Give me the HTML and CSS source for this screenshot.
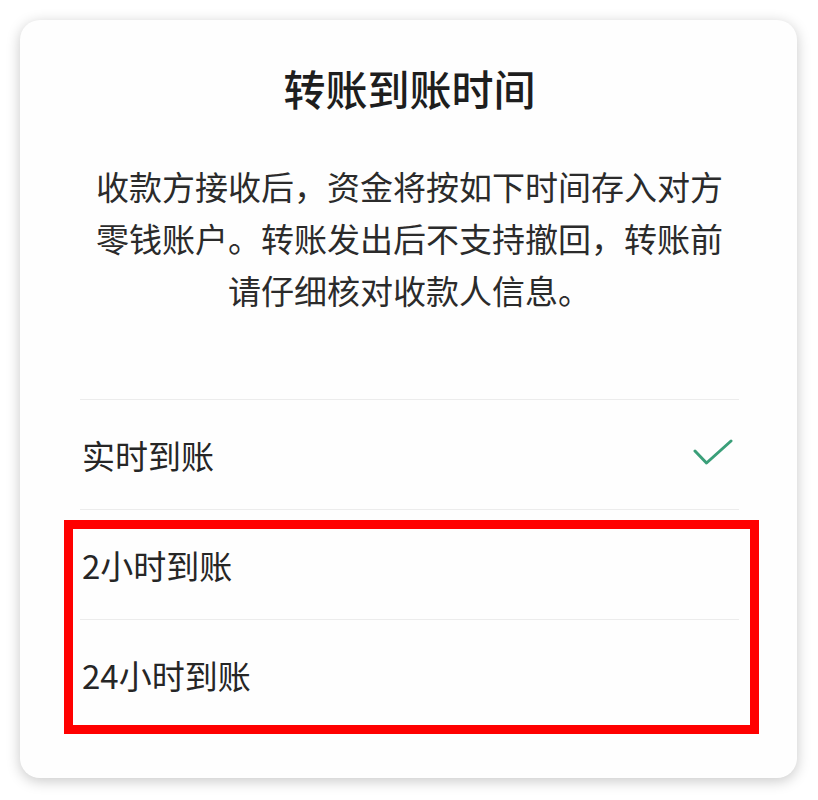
FILE: index.html
```html
<!DOCTYPE html>
<html lang="zh-CN">
<head>
<meta charset="utf-8">
<title>转账到账时间</title>
<link rel="stylesheet" href="styles.css">
</head>
<body>
<div class="card">
  <h1 class="title">转账到账时间</h1>
  <p class="desc">收款方接收后，资金将按如下时间存入对方零钱账户。转账发出后不支持撤回，转账前请仔细核对收款人信息。</p>
  <div class="list">
    <div class="row">
      <span class="label">实时到账</span>
      <svg class="check" width="40" height="28" viewBox="0 0 40 28" aria-hidden="true">
        <path d="M2 12 L13.5 24 L38 2" fill="none" stroke="#3a9f79" stroke-width="3" stroke-linecap="round" stroke-linejoin="round"/>
      </svg>
    </div>
    <div class="group">
      <div class="row"><span class="label">2小时到账</span></div>
      <div class="row"><span class="label">24小时到账</span></div>
      <div class="highlight"></div>
    </div>
  </div>
</div>
</body>
</html>
```

FILE: styles.css
```css
html, body {
  margin: 0;
  padding: 0;
  background: #ffffff;
}

body {
  font-family: "Noto Sans CJK SC", "Noto Sans", sans-serif;
  color: #222222;
  padding: 20px 21px 22px 20px;
}

.card {
  width: 777px;
  height: 758px;
  box-sizing: border-box;
  background: #fefefe;
  border-radius: 20px;
  box-shadow: 0 3px 14px rgba(0, 0, 0, 0.22);
  padding: 40px 58px 0 60px;
  display: flex;
  flex-direction: column;
}

.title {
  margin: 0;
  font-size: 42px;
  line-height: 55px;
  font-weight: 500;
  text-align: center;
  color: #1e1e1e;
}

.desc {
  margin: 45px auto 0;
  width: 650px;
  font-size: 33px;
  line-height: 52px;
  text-align: center;
  color: #2b2b2b;
}

.list {
  margin-top: 83px;
  display: flex;
  flex-direction: column;
}

.row {
  height: 109px;
  border-top: 1px solid #ececec;
  display: flex;
  align-items: center;
  justify-content: space-between;
  padding: 0 6px 0 2px;
}

.label {
  font-size: 33px;
  color: #262626;
}

.check {
  display: block;
  margin-top: -4px;
}

.group {
  position: relative;
}

.highlight {
  position: absolute;
  top: 11px;
  left: -16px;
  right: -20px;
  bottom: -5px;
  border: 9px solid #ff0000;
  pointer-events: none;
}
```
